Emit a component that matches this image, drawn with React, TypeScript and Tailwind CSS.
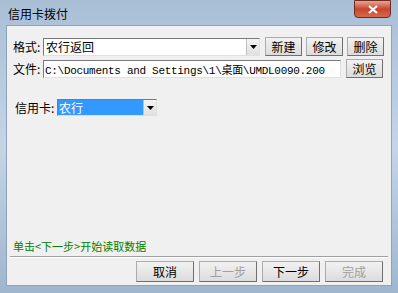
const cjk = "font-['SimSun','Noto_Sans_CJK_SC',sans-serif]"

function Btn({ label, disabled, big }: { label: string; disabled?: boolean; big?: boolean }) {
  return (
    <div
      className={`${big ? "w-[58px] h-[21px]" : "w-[37px] h-[19px]"} flex items-center justify-center text-[12px] leading-none border border-[#acacac] border-r-[#707070] border-b-[#707070] bg-gradient-to-b from-[#f2f2f2] to-[#dcdcdc] ${disabled ? "text-[#a0a0a0]" : "text-black"}`}
    >
      {label}
    </div>
  )
}

function Arrow() {
  return (
    <div className="w-[13px] h-full flex items-center justify-center border-l border-[#c0c0c0] bg-gradient-to-b from-[#f4f4f4] to-[#e0e0e0]">
      <svg width="7" height="4" viewBox="0 0 7 4"><path d="M0 0h7L3.5 4z" fill="#000" /></svg>
    </div>
  )
}

export default function App() {
  return (
    <div className={`w-[398px] h-[293px] bg-gradient-to-b from-[#a9bfd6] via-[#c4d5e6] to-[#9fb6cf] p-[6px] pt-0 pb-[7px] flex flex-col ${cjk}`}>
      <div className="h-[25px] flex items-start justify-between">
        <div className="text-[12px] text-black pt-[5px] pl-[2px]">信用卡拨付</div>
        <div className="w-[37px] h-[18px] mr-[1px] rounded-b-[4px] border border-[#6b2a22] bg-gradient-to-b from-[#e8a496] via-[#c8432c] to-[#d36a4f] flex items-center justify-center">
          <svg width="10" height="9" viewBox="0 0 10 9"><path d="M1 1l8 7M9 1L1 8" stroke="#fff" strokeWidth="2.2" /></svg>
        </div>
      </div>
      <div className="flex-1 bg-[#f0f0f0] border border-[#8ea3bb] flex flex-col px-[6px] text-[12px] text-black">
        <div className="flex items-center mt-[11px] h-[19px]">
          <span className="w-[30px]">格式:</span>
          <div className="w-[217px] h-[18px] flex bg-white border border-[#7a7a7a] border-r-[#e0e0e0] border-b-[#e0e0e0]">
            <span className="flex-1 pl-[2px] leading-[16px]">农行返回</span>
            <Arrow />
          </div>
          <div className="ml-[5px] flex gap-[4px]">
            <Btn label="新建" />
            <Btn label="修改" />
            <Btn label="删除" />
          </div>
        </div>
        <div className="flex items-center mt-[3px] h-[19px]">
          <span className="w-[30px]">文件:</span>
          <div className="w-[298px] h-[18px] bg-white border border-[#7a7a7a] border-r-[#e0e0e0] border-b-[#e0e0e0] pl-[1px] leading-[16px] text-[11px] font-['Liberation_Mono','SimSun','Noto_Sans_CJK_SC',monospace] whitespace-nowrap overflow-hidden tracking-[-0.3px]">
            C:\Documents and Settings\1\<span className={cjk}>桌面</span>\UMDL0090.200
          </div>
          <div className="ml-[5px]"><Btn label="浏览" /></div>
        </div>
        <div className="flex items-center mt-[21px] h-[17px] pl-[2px]">
          <span className="w-[42px]">信用卡:</span>
          <div className="w-[100px] h-[17px] flex bg-white border border-[#7a7a7a] border-r-[#e0e0e0] border-b-[#e0e0e0]">
            <span className="flex-1 bg-[#3399ff] text-white pl-[1px] leading-[15px]">农行</span>
            <Arrow />
          </div>
        </div>
        <div className="flex-1" />
        <div className="text-[11px] text-[#008000] leading-none">单击&lt;下一步&gt;开始读取数据</div>
        <div className="mt-[4px] h-[2px] border-t border-[#a0a0a0] border-b border-b-white mx-[-3px]" />
        <div className="flex justify-end gap-[5px] mt-[3px] mb-[3px] pr-[2px]">
          <Btn label="取消" big />
          <Btn label="上一步" big disabled />
          <Btn label="下一步" big />
          <Btn label="完成" big disabled />
        </div>
      </div>
    </div>
  )
}
